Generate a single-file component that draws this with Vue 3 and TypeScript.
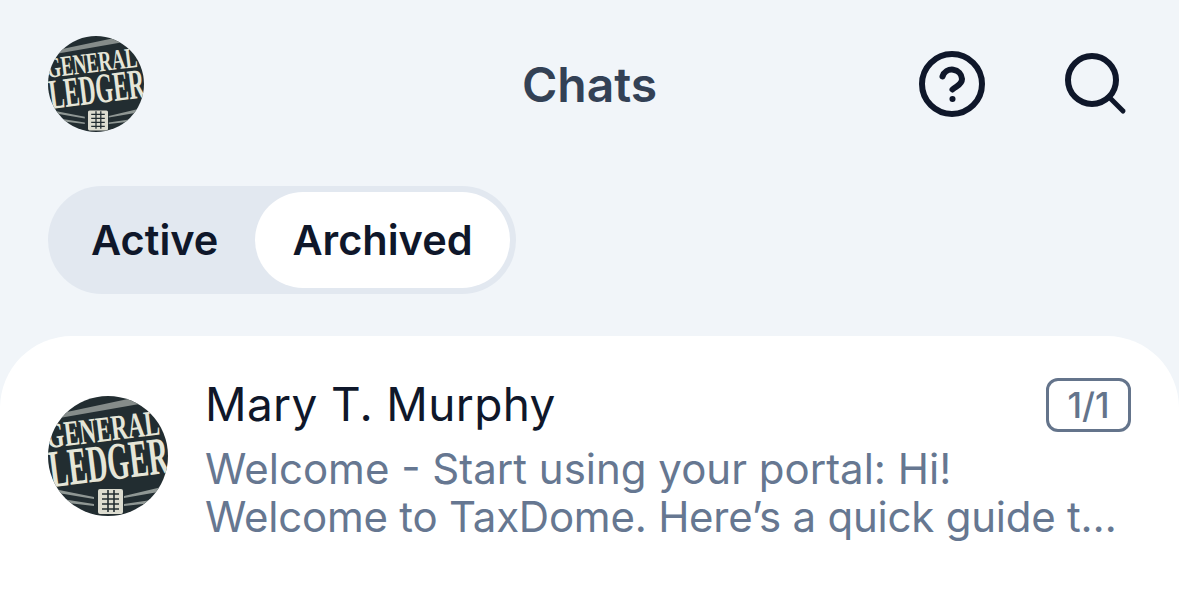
<script setup lang="ts">
const tabs: { label: string; active: boolean }[] = [
  { label: 'Active', active: false },
  { label: 'Archived', active: true },
]
</script>

<template>
  <div class="screen">
    <header class="top">
      <svg class="logo small" viewBox="0 0 120 120" aria-hidden="true">
        <rect width="120" height="120" fill="#222d31" />
        <path d="M0 20 L80 3 L120 0 L120 3 L0 24Z" fill="#858c8a" />
        <g transform="rotate(-7 60 60)">
          <text x="58" y="45" class="g1" text-anchor="middle" textLength="114" lengthAdjust="spacingAndGlyphs">GENERAL</text>
          <text x="60" y="84" class="g2" text-anchor="middle" textLength="120" lengthAdjust="spacingAndGlyphs">LEDGER</text>
        </g>
        <path d="M6 93 L46 101 L46 103 L10 97Z M118 90 L76 100 L76 102 L116 95Z M14 103 L46 108 L46 110 L20 107Z M110 103 L76 108 L76 110 L104 107Z" fill="#8f9794" />
        <rect x="50" y="93" width="25" height="25" rx="2" fill="#dcdcd0" />
        <path d="M54 98H71M54 103H71M54 108H71M54 113H71M60 94V116M66 94V116" stroke="#222d31" stroke-width="1.600" fill="none" />
      </svg>
      <h1 class="title">Chats</h1>
      <div class="actions">
        <svg class="ico help" viewBox="0 0 66 66" fill="none" stroke="#0f172a" stroke-width="6" stroke-linecap="round" stroke-linejoin="round" aria-hidden="true">
          <circle cx="33" cy="33" r="30" />
          <path d="M23.500 25.500a10 10 0 0 1 19.500 2.500c0 6-6 7-9.500 10.500" />
          <circle cx="33.500" cy="48" r="1.300" fill="#0f172a" stroke-width="3.500" />
        </svg>
        <svg class="ico search" viewBox="0 0 62 62" fill="none" stroke="#0f172a" stroke-width="6" stroke-linecap="round" aria-hidden="true">
          <circle cx="27" cy="27" r="24" />
          <path d="M44 44 L58 58" stroke-width="5" />
        </svg>
      </div>
    </header>

    <div class="seg">
      <span v-for="t in tabs" :key="t.label" class="tab" :class="{ on: t.active }">{{ t.label }}</span>
    </div>

    <section class="panel">
      <article class="row">
        <svg class="logo big" viewBox="0 0 120 120" aria-hidden="true">
          <rect width="120" height="120" fill="#222d31" />
          <path d="M0 20 L80 3 L120 0 L120 3 L0 24Z" fill="#858c8a" />
          <g transform="rotate(-7 60 60)">
            <text x="58" y="45" class="g1" text-anchor="middle" textLength="114" lengthAdjust="spacingAndGlyphs">GENERAL</text>
            <text x="60" y="84" class="g2" text-anchor="middle" textLength="120" lengthAdjust="spacingAndGlyphs">LEDGER</text>
          </g>
          <path d="M6 93 L46 101 L46 103 L10 97Z M118 90 L76 100 L76 102 L116 95Z M14 103 L46 108 L46 110 L20 107Z M110 103 L76 108 L76 110 L104 107Z" fill="#8f9794" />
          <rect x="50" y="93" width="25" height="25" rx="2" fill="#dcdcd0" />
          <path d="M54 98H71M54 103H71M54 108H71M54 113H71M60 94V116M66 94V116" stroke="#222d31" stroke-width="1.600" fill="none" />
        </svg>
        <div class="body">
          <div class="head">
            <span class="name">Mary T. Murphy</span>
            <span class="badge">1/1</span>
          </div>
          <p class="msg">
            <span class="line">Welcome - Start using your portal: Hi!</span>
            <span class="line tight">Welcome to TaxDome. Here’s a quick guide t…</span>
          </p>
        </div>
      </article>
    </section>
  </div>
</template>

<style>
html, body { margin: 0; background: #f1f5f9; }
</style>

<style scoped>
.screen {
  width: 1179px;
  height: 598px;
  overflow: hidden;
  background: #f1f5f9;
  font-family: Inter, "Liberation Sans", sans-serif;
  color: #0f172a;
  display: flex;
  flex-direction: column;
}
.top {
  position: relative;
  display: flex;
  align-items: center;
  justify-content: space-between;
  padding: 36px 52px 0 48px;
  height: 96px;
}
.logo { display: block; flex: none; border-radius: 50%; }
.logo.small { width: 96px; height: 96px; }
.logo.big { width: 120px; height: 120px; }
.g1 { font: 700 36px "Liberation Serif", serif; fill: #e6e6d8; }
.g2 { font: 700 53px "Liberation Serif", serif; fill: #e6e6d8; }
.title {
  position: absolute;
  left: 0;
  right: 0;
  top: 57px;
  margin: 0;
  text-align: center;
  font-size: 48px;
  line-height: 56px;
  font-weight: 600;
  color: #334155;
}
.actions { display: flex; align-items: center; gap: 80px; }
.ico { display: block; flex: none; }
.help { width: 66px; height: 66px; }
.search { width: 62px; height: 62px; }
.seg {
  align-self: flex-start;
  display: flex;
  margin: 54px 0 0 48px;
  padding: 6px;
  background: #e2e8f0;
  border-radius: 54px;
}
.tab {
  padding: 0 37px;
  height: 96px;
  line-height: 96px;
  font-size: 41.500px;
  font-weight: 600;
  border-radius: 48px;
}
.tab.on { background: #fff; }
.panel {
  margin-top: 42px;
  flex: 1;
  background: #fff;
  border-radius: 72px 72px 0 0;
  padding: 42px 48px 0;
}
.row { display: flex; gap: 37px; padding-top: 18px; }
.body { flex: 1; min-width: 0; margin-top: -18px; }
.head { display: flex; justify-content: space-between; align-items: flex-start; }
.name { font-size: 46px; line-height: 52px; font-weight: 400; letter-spacing: 0.350px; }
.badge {
  box-sizing: border-box;
  width: 85px;
  height: 54px;
  border: 3px solid #64748b;
  border-radius: 12px;
  text-align: center;
  font-size: 35px;
  line-height: 48px;
  font-weight: 500;
  color: #64748b;
}
.msg {
  margin: 13px 0 0;
  font-size: 42px;
  line-height: 48px;
  color: #667791;
  white-space: nowrap;
}
.line { display: block; }
.tight { letter-spacing: -0.230px; }
</style>
